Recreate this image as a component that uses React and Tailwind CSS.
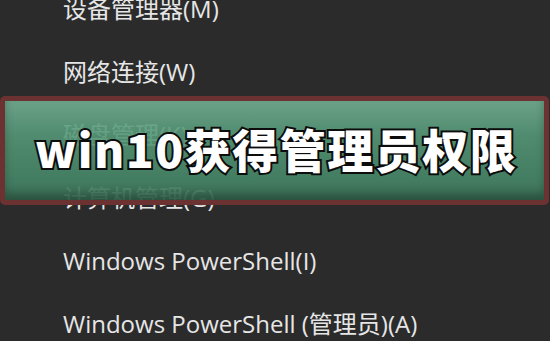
import React from 'react';

const items = [
  '设备管理器(M)',
  '网络连接(W)',
  '磁盘管理(K)',
  '计算机管理(G)',
  'Windows PowerShell(I)',
  'Windows PowerShell (管理员)(A)',
];

const App = () => {
  return (
    <div className="relative w-[550px] h-[341px] overflow-hidden bg-[#2b2b2b]">
      {/* menu list behind the banner */}
      <ul className="flex flex-col mt-[-23px] pl-[63px] text-[24px] text-[#e6e6e6] [font-family:'Open_Sans','Noto_Sans_CJK_SC',sans-serif]">
        {items.map(item => (
          <li key={item} className="h-[63px] flex items-center whitespace-nowrap">
            {item}
          </li>
        ))}
      </ul>

      {/* title banner */}
      <div className="absolute left-0 top-[96px] w-[549px] h-[109px] rounded-[5px] border-[5px] border-[#6c3131] bg-[linear-gradient(180deg,rgba(114,174,146,0.9)_0%,rgba(84,150,118,0.9)_35%,rgba(70,134,103,0.9)_80%,rgba(58,112,86,0.92)_100%)] shadow-[inset_0_-6px_8px_rgba(0,0,0,0.25)] flex items-center pl-[30px] pb-[6px]">
        <span className="text-[46px] leading-none font-black text-white tracking-[1.5px] [font-family:'Noto_Sans_CJK_SC',sans-serif] [-webkit-text-stroke:4px_#0d0d0d] [paint-order:stroke_fill]">
          win10获得管理员权限
        </span>
      </div>
    </div>
  );
};

export default App;
